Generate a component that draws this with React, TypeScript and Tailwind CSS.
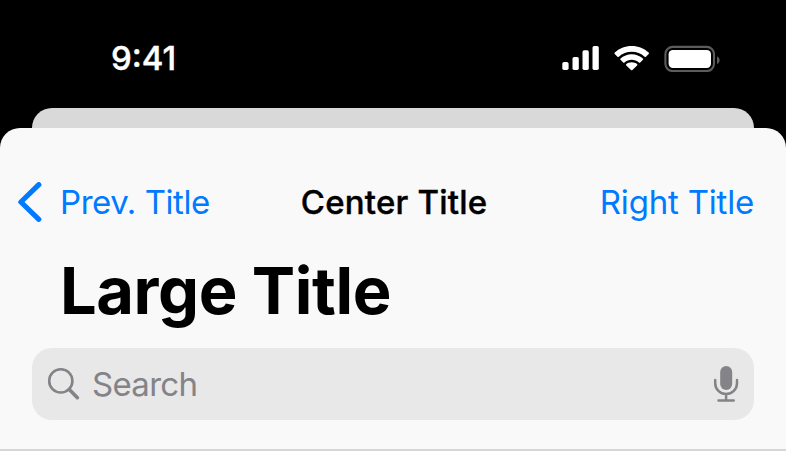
import React from "react";

function SignalIcon() {
  return (
    <svg width="38" height="28" viewBox="562 44 38 28" fill="#fff">
      <rect x="562.3" y="62" width="6.3" height="8" rx="1.7" />
      <rect x="572.5" y="57" width="6.3" height="13" rx="1.7" />
      <rect x="582.5" y="50.2" width="6.3" height="19.8" rx="1.7" />
      <rect x="592.5" y="46" width="6.3" height="24" rx="1.7" />
    </svg>
  );
}

function WifiIcon() {
  return (
    <svg width="36" height="28" viewBox="0 0 36 28" fill="#fff">
      <path d="M17.700 2C24.400 2 30.300 4.500 34.700 8.600 35.100 9 35.100 9.500 34.700 9.900L31.900 12.700C31.500 13.100 31 13.100 30.600 12.700 27.100 9.500 22.600 7.700 17.700 7.700S8.300 9.500 4.800 12.700C4.400 13.100 3.900 13.100 3.500 12.700L.700 9.900C.300 9.500.300 9 .700 8.600 5.100 4.500 11 2 17.700 2Z" />
      <path d="M17.700 10.200C22 10.200 25.900 11.800 28.900 14.500 29.300 14.900 29.300 15.400 28.900 15.800L26.200 18.500C25.800 18.900 25.300 18.900 24.900 18.500 22.900 16.800 20.400 15.800 17.700 15.800S12.500 16.800 10.500 18.500C10.100 18.900 9.600 18.900 9.200 18.500L6.500 15.800C6.100 15.400 6.100 14.900 6.500 14.500 9.500 11.800 13.400 10.200 17.700 10.200Z" />
      <path d="M17.700 18.200C19.800 18.200 21.700 18.900 23.100 20.100 23.500 20.500 23.500 21 23.100 21.400L18.400 26C18 26.400 17.400 26.400 17 26L12.300 21.400C11.900 21 11.900 20.500 12.300 20.100 13.700 18.900 15.600 18.200 17.700 18.200Z" />
    </svg>
  );
}

function BatteryIcon() {
  return (
    <svg width="56" height="28" viewBox="664 44 56 28" fill="none">
      <rect x="665.4" y="46.900" width="48.6" height="24.1" rx="7.2" stroke="#5c5c5c" strokeWidth="2.1" />
      <rect x="668.6" y="50" width="42.4" height="18" rx="4.2" fill="#fff" />
      <path d="M717 56.400v7.600c1.600-.6 2.600-2 2.600-3.800s-1-3.200-2.600-3.800Z" fill="#5c5c5c" />
    </svg>
  );
}

function SearchIcon() {
  return (
    <svg width="34" height="34" viewBox="47 367 34 34" fill="none" stroke="#838388">
      <circle cx="60.800" cy="380.900" r="11.600" strokeWidth="2.600" />
      <path d="M69.300 389.400 77.400 397.700" strokeWidth="3.600" strokeLinecap="round" />
    </svg>
  );
}

function MicIcon() {
  return (
    <svg width="26" height="38" viewBox="713 365 26 38" fill="none" stroke="#838388" strokeWidth="2.500" strokeLinecap="round">
      <rect x="720.200" y="366" width="12" height="24" rx="6" fill="#838388" stroke="none" />
      <path d="M715.200 380v3.200a10.900 10.900 0 0 0 21.800 0V380M726.100 394v6.500M718.500 400.600h15.200" />
    </svg>
  );
}

export default function App() {
  return (
    <div className="h-[451px] w-[786px] overflow-hidden bg-black font-['Inter',sans-serif]">
      <header className="flex h-[108px] items-start justify-between pl-[111px] pr-[66px] text-white">
        <time className="mt-[38px] text-[33px] leading-10 font-medium tracking-[0px] [-webkit-text-stroke:0.4px_currentColor]">9:41</time>
        <div className="mt-[44px] flex items-center">
          <SignalIcon />
          <span className="ml-[14px]"><WifiIcon /></span>
          <span className="ml-[14px]"><BatteryIcon /></span>
        </div>
      </header>
      <div className="mx-8 h-5 rounded-t-[20px] bg-[#d9d9d9]" />
      <main className="h-[323px] rounded-t-[20px] border-b-2 border-[#d6d6d6] bg-[#f9f9f9]">
        <nav className="grid h-[122px] grid-cols-[1fr_auto_1fr] items-start px-[18px] pt-[54px] text-[33px] leading-[41px] text-[#007aff]">
          <button className="flex items-start text-left whitespace-nowrap">
            <svg className="mr-[18px] shrink-0" width="24" height="40" viewBox="0 0 24 40" fill="none" stroke="currentColor" strokeWidth="5.200" strokeLinecap="round" strokeLinejoin="round">
              <path d="M20.800 2.700 2.900 20 20.800 37.300" />
            </svg>
            <span className="tracking-[-0.450px]">Prev. Title</span>
          </button>
          <h2 className="pl-[2px] font-medium tracking-[0.200px] text-black [-webkit-text-stroke:0.4px_currentColor]">Center Title</h2>
          <button className="pr-[14px] text-right tracking-[-0.200px] whitespace-nowrap">Right Title</button>
        </nav>
        <h1 className="h-[98px] pl-[60px] text-[65px] leading-[82px] font-bold tracking-[-0.450px] text-black">Large Title</h1>
        <div className="mx-8 flex h-[72px] items-center rounded-[20px] bg-[#e8e8e8] pr-[15px] pl-[15px] text-[33px] leading-10 text-[#838388]">
          <SearchIcon />
          <span className="ml-[11px] flex-1 tracking-[-0.700px]">Search</span>
          <MicIcon />
        </div>
      </main>
    </div>
  );
}
